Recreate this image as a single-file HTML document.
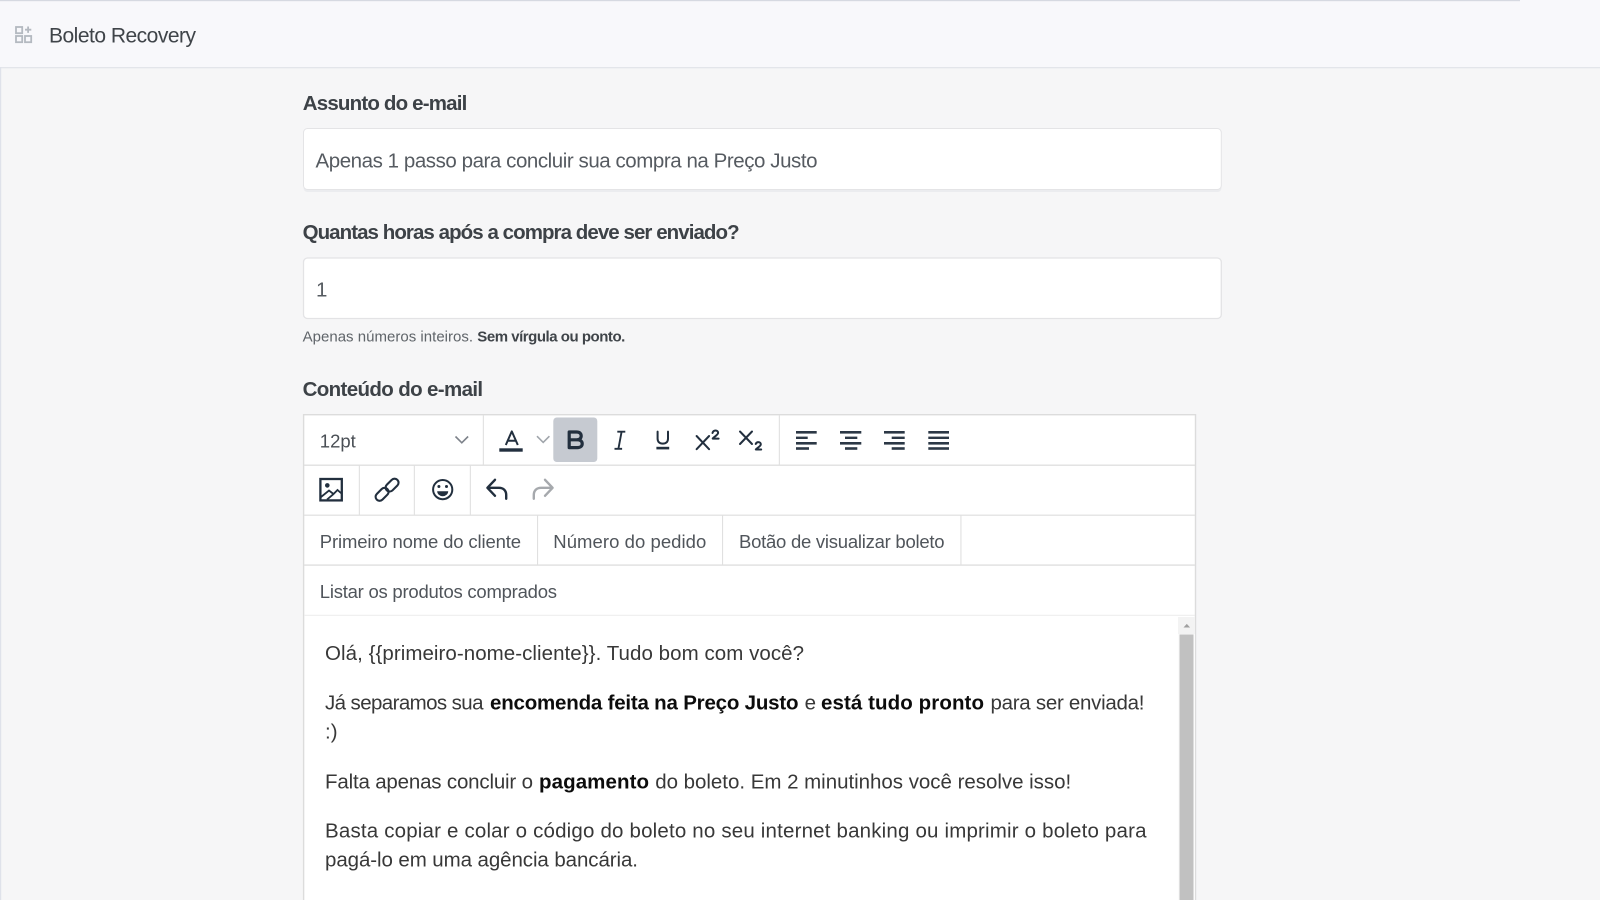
<!DOCTYPE html>
<html lang="pt-BR">
<head>
<meta charset="utf-8">
<title>Boleto Recovery</title>
<style>
html,body{margin:0;padding:0;width:1600px;height:900px;overflow:hidden;background:#f6f6f7}
svg{display:block;filter:blur(.35px)}
text{font-family:"Liberation Sans",sans-serif;white-space:pre}
.lb{font-size:20.5px;font-weight:700;fill:#3d4247}
.in{font-size:20.5px;fill:#565b61}
.hp{font-size:15px;fill:#5f6469}
.hb{font-size:15px;font-weight:700;fill:#3f4449}
.tb{font-size:18.5px;fill:#50555b}
.ct{font-size:20.5px;fill:#383838}
.cb{font-size:20.5px;font-weight:700;fill:#0c0c0c}
.ic{fill:none;stroke:#222f3e;stroke-width:2;stroke-linecap:round;stroke-linejoin:round}
</style>
</head>
<body>
<svg width="1600" height="900" viewBox="0 0 1600 900" xmlns="http://www.w3.org/2000/svg">
  <!-- page -->
  <rect width="1600" height="900" fill="#f6f6f7"/>
  <rect width="1600" height="68" fill="#f8f8fb"/>
  <rect x="0" y="0" width="1520" height="1.2" fill="#d6d9e1"/>
  <rect x="0" y="67" width="1600" height="1.3" fill="#e3e5ea"/>
  <rect x="0" y="67" width="1.2" height="833" fill="#dfe2ea"/>

  <!-- header icon -->
  <g fill="none" stroke="#b4b9c0" stroke-width="1.8">
    <rect x="16" y="27" width="6.2" height="6.2"/>
    <rect x="16" y="36" width="6.2" height="6.2"/>
    <rect x="25" y="36" width="6.2" height="6.2"/>
    <path d="M28.1 26.5v6.4M25 29.7h6.3"/>
  </g>
  <text x="49" y="42.4" font-size="21" fill="#3f4449" textLength="147" lengthAdjust="spacing">Boleto Recovery</text>

  <!-- field 1 -->
  <text class="lb" x="302.8" y="110" textLength="164.5" lengthAdjust="spacing">Assunto do e-mail</text>
  <rect x="303.5" y="130" width="918" height="62" rx="4" fill="#ebecef"/>
  <rect x="303.5" y="128.5" width="917.8" height="61" rx="4" fill="#fff" stroke="#e4e4e6"/>
  <text class="in" x="315.5" y="167.3" textLength="502" lengthAdjust="spacing">Apenas 1 passo para concluir sua compra na Preço Justo</text>

  <!-- field 2 -->
  <text class="lb" x="302.6" y="239" textLength="437" lengthAdjust="spacing">Quantas horas após a compra deve ser enviado?</text>
  <rect x="303.5" y="258" width="917.8" height="60.5" rx="4" fill="#fff" stroke="#e3e3e5" stroke-width="1.3"/>
  <text class="in" x="316" y="296.3">1</text>
  <text class="hp" x="302.6" y="341.7" textLength="170.5" lengthAdjust="spacing">Apenas números inteiros.</text>
  <text class="hb" x="477.3" y="341.7" textLength="148" lengthAdjust="spacing">Sem vírgula ou ponto.</text>

  <!-- field 3 -->
  <text class="lb" x="302.6" y="396" textLength="180.5" lengthAdjust="spacing">Conteúdo do e-mail</text>

  <!-- editor -->
  <rect x="303.6" y="414.7" width="891.9" height="490" fill="#fff" stroke="#dcdcdc" stroke-width="1.4"/>
  <g fill="#e0e0e0">
    <rect x="304" y="464.5" width="891" height="1.4"/>
    <rect x="304" y="514.6" width="891" height="1.2"/>
    <rect x="304" y="564.4" width="891" height="1.4"/>
    <rect x="304" y="614.8" width="891" height="1" fill="#ececec"/>
    <rect x="482.8" y="415" width="1.1" height="50"/>
    <rect x="778.8" y="415" width="1.1" height="50"/>
    <rect x="358.8" y="465" width="1.1" height="50"/>
    <rect x="413.8" y="465" width="1.1" height="50"/>
    <rect x="469.8" y="465" width="1.1" height="50"/>
    <rect x="537" y="515" width="1.1" height="50"/>
    <rect x="722" y="515" width="1.1" height="50"/>
    <rect x="960.4" y="515" width="1.1" height="50"/>
  </g>

  <!-- row 1 -->
  <text x="319.8" y="447.3" font-size="18.5" fill="#4a4f55" textLength="36" lengthAdjust="spacing">12pt</text>
  <path d="M455.5 436.5l6.3 6.3 6.3-6.3" fill="none" stroke="#7d828a" stroke-width="1.6"/>
  <path d="M505.8 445L511.8 431.4 517.8 445M507.6 440.8h8.4" class="ic" stroke-width="2.4" style="stroke-linecap:butt"/>
  <rect x="499.3" y="448.3" width="23.4" height="3.4" fill="#222f3e"/>
  <path d="M537 436.2l6.2 6.2 6.2-6.2" fill="none" stroke="#a0a5ab" stroke-width="1.6"/>
  <rect x="553.3" y="417.5" width="44" height="44.5" rx="3.5" fill="#c6cad1"/>
  <path d="M569.2 432h7.4c3 0 4.6 1.5 4.6 3.9 0 2.3-1.6 3.9-4.6 3.9h-7.4zM569.2 439.8h8.2c3 0 4.8 1.5 4.8 3.9 0 2.4-1.8 3.9-4.8 3.9h-8.2z" fill="none" stroke="#222f3e" stroke-width="3.2" stroke-linejoin="round"/>
  <path d="M617.3 431.7h8M614.5 448.8h7.6M621.6 431.7l-3.2 17.1" fill="none" stroke="#222f3e" stroke-width="1.9"/>
  <path d="M657.6 431.6v7c0 3.4 2.1 5 5.2 5s5.2-1.6 5.2-5v-7" class="ic" stroke-width="2.3"/>
  <rect x="656.4" y="446.8" width="12.8" height="2.6" fill="#222f3e"/>
  <path d="M696.6 436l12.5 13.2M709.1 436l-12.5 13.2" class="ic" stroke-width="2.5"/>
  <path d="M712.5 433c.5-1.6 1.6-2.5 3-2.5 1.5 0 2.6 1 2.6 2.3 0 2.3-3.8 3.5-5.4 5.8h5.9" class="ic" stroke-width="1.7"/>
  <path d="M740 431.5l12 12.5M752 431.5l-12 12.5" class="ic" stroke-width="2.5"/>
  <path d="M755.7 444c.5-1.3 1.5-1.9 2.7-1.9 1.4 0 2.4.9 2.4 2.1 0 2.2-3.4 3.2-5 5.3h5.4" class="ic" stroke-width="1.7"/>

  <!-- alignment -->
  <g fill="#2c3846">
    <rect x="796" y="431" width="20.7" height="2.6"/><rect x="796" y="436.6" width="11.7" height="2.4"/><rect x="796" y="442" width="20.7" height="2.6"/><rect x="796" y="447.2" width="13" height="2.6"/>
    <rect x="840" y="431" width="21.3" height="2.6"/><rect x="845" y="436.6" width="12.3" height="2.4"/><rect x="840" y="442" width="21.3" height="2.6"/><rect x="845" y="447.2" width="12.3" height="2.6"/>
    <rect x="884" y="431" width="20.7" height="2.6"/><rect x="891.7" y="436.6" width="13" height="2.4"/><rect x="884" y="442" width="20.7" height="2.6"/><rect x="891.7" y="447.2" width="13" height="2.6"/>
    <rect x="928.3" y="431" width="20.7" height="2.6"/><rect x="928.3" y="436.6" width="20.7" height="2.4"/><rect x="928.3" y="442" width="20.7" height="2.6"/><rect x="928.3" y="447.2" width="20.7" height="2.6"/>
  </g>

  <!-- row 2 -->
  <rect x="320.4" y="479" width="21.4" height="21.4" fill="none" stroke="#222f3e" stroke-width="2.3"/>
  <circle cx="327.3" cy="485.4" r="2.3" fill="#222f3e"/>
  <path d="M321 497l8-6.5 4.5 3.5 4-4 4 3.5M327 499.6l6.5-5.5" fill="none" stroke="#222f3e" stroke-width="1.8"/>
  <rect x="384.6" y="481.2" width="15" height="8" rx="4" transform="rotate(-45 392 485.2)" fill="none" stroke="#222f3e" stroke-width="2.1"/>
  <rect x="374.6" y="490.4" width="15" height="8" rx="4" transform="rotate(-45 382 494.4)" fill="none" stroke="#222f3e" stroke-width="2.1"/>
  <circle cx="442.7" cy="489.6" r="9.6" fill="none" stroke="#222f3e" stroke-width="2"/>
  <circle cx="438.9" cy="486.5" r="1.5" fill="#222f3e"/>
  <circle cx="446.5" cy="486.5" r="1.5" fill="#222f3e"/>
  <path d="M437.2 491.2h11a5.5 5 0 0 1-11 0z" fill="#222f3e"/>
  <path d="M495 479.8l-7.6 8 7.6 8M487.6 487.8h11.4c4.4 0 7.2 2.8 7.2 7v4" fill="none" stroke="#222f3e" stroke-width="2.4" stroke-linecap="round" stroke-linejoin="round"/>
  <path d="M545 479.8l7.6 8-7.6 8M552.4 487.8H541c-4.4 0-7.2 2.8-7.2 7v4" fill="none" stroke="#a6a9ad" stroke-width="2.4" stroke-linecap="round" stroke-linejoin="round"/>

  <!-- rows 3-4 -->
  <text class="tb" x="319.8" y="548" textLength="201.2" lengthAdjust="spacing">Primeiro nome do cliente</text>
  <text class="tb" x="553.3" y="548" textLength="153" lengthAdjust="spacing">Número do pedido</text>
  <text class="tb" x="739" y="548" textLength="205.6" lengthAdjust="spacing">Botão de visualizar boleto</text>
  <text class="tb" x="319.8" y="598" textLength="237.2" lengthAdjust="spacing">Listar os produtos comprados</text>

  <!-- content -->
  <text class="ct" x="325" y="660" textLength="479" lengthAdjust="spacing">Olá, {{primeiro-nome-cliente}}. Tudo bom com você?</text>

  <text class="ct" x="325" y="709.3" textLength="158.5" lengthAdjust="spacing">Já separamos sua</text>
  <text class="cb" x="490" y="709.3" textLength="308.5" lengthAdjust="spacing">encomenda feita na Preço Justo</text>
  <text class="ct" x="804.6" y="709.3" textLength="10.4" lengthAdjust="spacing">e</text>
  <text class="cb" x="821" y="709.3" textLength="163" lengthAdjust="spacing">está tudo pronto</text>
  <text class="ct" x="990.5" y="709.3" textLength="154" lengthAdjust="spacing">para ser enviada!</text>
  <text class="ct" x="325" y="738.3">:)</text>

  <text class="ct" x="325" y="788.3" textLength="208" lengthAdjust="spacing">Falta apenas concluir o</text>
  <text class="cb" x="539" y="788.3" textLength="110" lengthAdjust="spacing">pagamento</text>
  <text class="ct" x="655.2" y="788.3" textLength="416" lengthAdjust="spacing">do boleto. Em 2 minutinhos você resolve isso!</text>

  <text class="ct" x="325" y="837.5" textLength="821.5" lengthAdjust="spacing">Basta copiar e colar o código do boleto no seu internet banking ou imprimir o boleto para</text>
  <text class="ct" x="325" y="866.3" textLength="313" lengthAdjust="spacing">pagá-lo em uma agência bancária.</text>

  <!-- scrollbar -->
  <rect x="1178" y="617" width="17" height="283" fill="#fbfbfb"/>
  <rect x="1178" y="617" width="17" height="17" fill="#f3f3f3"/>
  <path d="M1183.5 627.5l3.3-3.6 3.3 3.6z" fill="#a0a0a0"/>
  <rect x="1179.5" y="634.5" width="14" height="265.5" fill="#c1c1c1"/>
</svg>
</body>
</html>
